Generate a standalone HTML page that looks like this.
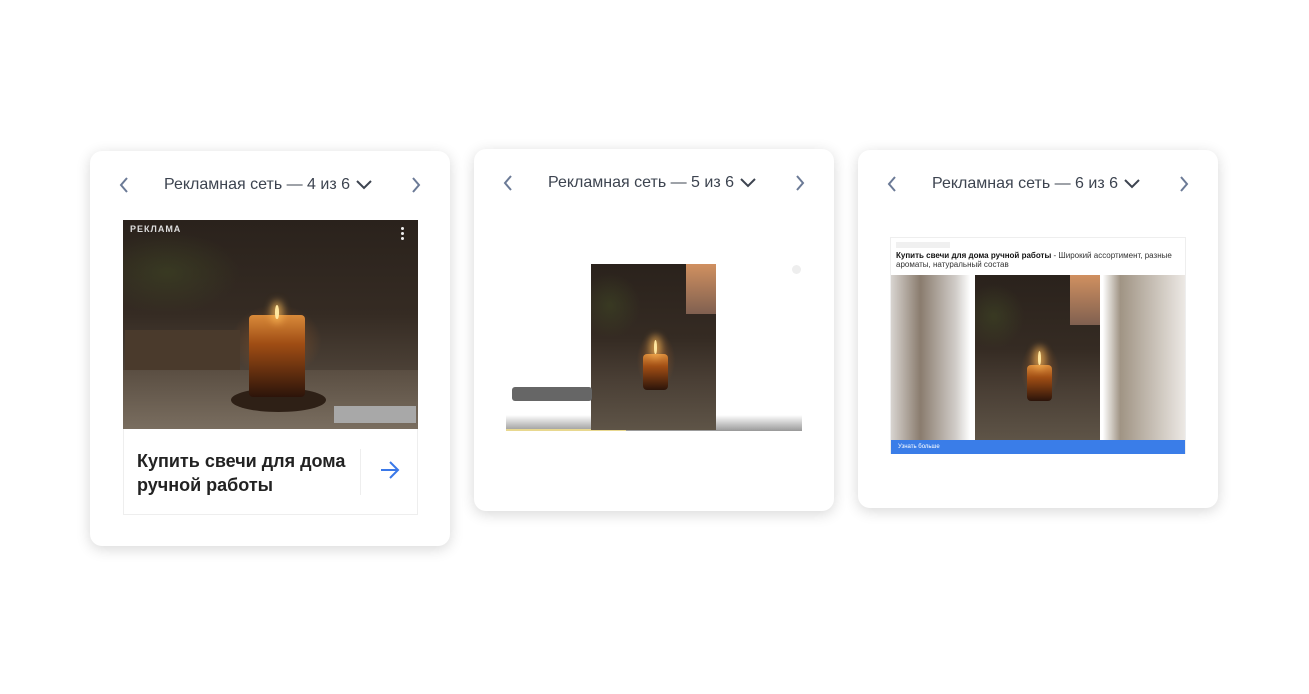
<!DOCTYPE html><html><head><meta charset="utf-8"><style>
body{margin:0;width:1309px;height:694px;background:#fff;position:relative;overflow:hidden;font-family:"Liberation Sans","DejaVu Sans",sans-serif}
.card{position:absolute;width:360px;background:#fff;border-radius:12px;box-shadow:0 3px 14px rgba(0,0,0,.16)}
.hd{position:absolute;top:0;left:0;right:0;height:66px;color:#3d4450;font-size:16px}
.hd .t{position:absolute;top:25px;left:74px;white-space:nowrap}
.hd svg{position:absolute}
.ph{position:absolute;overflow:hidden;background:
radial-gradient(ellipse 22% 25% at 52% 58%,rgba(200,110,40,.45),rgba(0,0,0,0) 70%),
radial-gradient(ellipse 35% 28% at 15% 25%,rgba(60,65,35,.7),rgba(0,0,0,0) 70%),
linear-gradient(180deg,#2a221c 0%,#352b23 45%,#4a3f35 70%,#5e5447 100%)}
.jar{position:absolute;background:linear-gradient(180deg,#d98a3a 0%,#a04d14 35%,#2c140a 100%);border-radius:4px}
.fl{position:absolute;background:#ffe7a0;border-radius:50% 50% 40% 40%;box-shadow:0 0 8px 4px rgba(255,190,90,.7)}
</style></head><body>

<div class="card" style="left:90px;top:151px;height:395px">
 <div class="hd">
  <svg style="left:28px;top:25px" width="12" height="18"><path d="M9 2 L3 9 L9 16" stroke="#6b7a96" stroke-width="2" fill="none"/></svg>
  <span class="t">Рекламная сеть — 4 из 6</span>
  <svg style="left:264px;top:27px" width="20" height="14"><path d="M3 3 L10 10 L17 3" stroke="#3d4450" stroke-width="2" fill="none"/></svg>
  <svg style="left:320px;top:25px" width="12" height="18"><path d="M3 2 L9 9 L3 16" stroke="#6b7a96" stroke-width="2" fill="none"/></svg>
 </div>
 <div class="ph" style="left:33px;top:69px;width:295px;height:209px">
  <div style="position:absolute;left:7px;top:4px;font-size:9px;font-weight:bold;color:#ddd;letter-spacing:1px">РЕКЛАМА</div>
  <div style="position:absolute;right:14px;top:7px;width:3px;height:3px;background:#eee;border-radius:50%;box-shadow:0 5px 0 #eee,0 10px 0 #eee"></div>
  <div style="position:absolute;left:2px;top:110px;width:115px;height:60px;background:#4a3a2c"></div>
  <div style="position:absolute;left:0;top:150px;width:295px;height:60px;background:linear-gradient(180deg,#5a4e42,#7a6e60)"></div>
  <div style="position:absolute;left:108px;top:168px;width:95px;height:24px;background:#2e2016;border-radius:50%"></div>
  <div class="jar" style="left:126px;top:95px;width:56px;height:82px"></div>
  <div class="fl" style="left:152px;top:85px;width:4px;height:14px"></div>
  <div style="position:absolute;left:211px;top:186px;width:82px;height:17px;background:#a8a8a8"></div>
 </div>
 <div style="position:absolute;left:33px;top:278px;width:295px;height:86px;border:1px solid #eee;border-top:none;box-sizing:border-box">
  <div style="position:absolute;left:13px;top:20px;font-size:18px;font-weight:bold;color:#222;line-height:24px">Купить свечи для дома<br>ручной работы</div>
  <div style="position:absolute;left:236px;top:20px;width:1px;height:46px;background:#eee"></div>
  <svg style="position:absolute;left:255px;top:31px" width="22" height="20"><path d="M2 10 H19 M11 2 L19 10 L11 18" stroke="#3a78e8" stroke-width="2" fill="none"/></svg>
 </div>
</div>

<div class="card" style="left:474px;top:149px;height:362px">
 <div class="hd">
  <svg style="left:28px;top:25px" width="12" height="18"><path d="M9 2 L3 9 L9 16" stroke="#6b7a96" stroke-width="2" fill="none"/></svg>
  <span class="t">Рекламная сеть — 5 из 6</span>
  <svg style="left:264px;top:27px" width="20" height="14"><path d="M3 3 L10 10 L17 3" stroke="#3d4450" stroke-width="2" fill="none"/></svg>
  <svg style="left:320px;top:25px" width="12" height="18"><path d="M3 2 L9 9 L3 16" stroke="#6b7a96" stroke-width="2" fill="none"/></svg>
 </div>
 <div style="position:absolute;left:32px;top:266px;width:296px;height:16px;background:linear-gradient(180deg,#fff,#999)"></div>
 <div style="position:absolute;left:32px;top:280px;width:120px;height:2px;background:#e8d890"></div>
 <div class="ph" style="left:117px;top:115px;width:125px;height:166px">
  <div style="position:absolute;right:0;top:0;width:30px;height:50px;background:linear-gradient(#d09060,#806050)"></div>
  <div class="jar" style="left:52px;top:90px;width:25px;height:36px"></div>
  <div class="fl" style="left:63px;top:76px;width:3px;height:14px"></div>
 </div>
 <div style="position:absolute;left:38px;top:238px;width:80px;height:14px;background:#666;border-radius:3px"></div>
 <div style="position:absolute;left:318px;top:116px;width:9px;height:9px;background:#eee;border-radius:50%"></div>
</div>

<div class="card" style="left:858px;top:150px;height:358px">
 <div class="hd">
  <svg style="left:28px;top:25px" width="12" height="18"><path d="M9 2 L3 9 L9 16" stroke="#6b7a96" stroke-width="2" fill="none"/></svg>
  <span class="t">Рекламная сеть — 6 из 6</span>
  <svg style="left:264px;top:27px" width="20" height="14"><path d="M3 3 L10 10 L17 3" stroke="#3d4450" stroke-width="2" fill="none"/></svg>
  <svg style="left:320px;top:25px" width="12" height="18"><path d="M3 2 L9 9 L3 16" stroke="#6b7a96" stroke-width="2" fill="none"/></svg>
 </div>
 <div style="position:absolute;left:32px;top:87px;width:296px;height:217px;border:1px solid #eee;box-sizing:border-box">
  <div style="position:absolute;left:5px;top:4px;width:54px;height:6px;background:#f0f0f0"></div>
  <div style="position:absolute;left:5px;top:13px;font-size:8px;line-height:9px;color:#333;width:280px"><b style="color:#111">Купить свечи для дома ручной работы</b> - Широкий ассортимент, разные ароматы, натуральный состав</div>
  <div style="position:absolute;left:0;top:37px;width:294px;height:165px;background:linear-gradient(90deg,#d8d4d0 0%,#8a7c6e 10%,#d0ccc8 22%,#fff 27%,#fff 72%,#a09484 78%,#ece8e4 100%)"></div>
  <div class="ph" style="left:84px;top:37px;width:125px;height:165px">
   <div style="position:absolute;right:0;top:0;width:30px;height:50px;background:linear-gradient(#d09060,#806050)"></div>
   <div class="jar" style="left:52px;top:90px;width:25px;height:36px"></div>
   <div class="fl" style="left:63px;top:76px;width:3px;height:14px"></div>
  </div>
  <div style="position:absolute;left:0;top:202px;width:294px;height:14px;background:#3a7de8;color:#fff;font-size:6px;line-height:14px;padding-left:7px;box-sizing:border-box">Узнать больше</div>
 </div>
</div>
</body></html>
